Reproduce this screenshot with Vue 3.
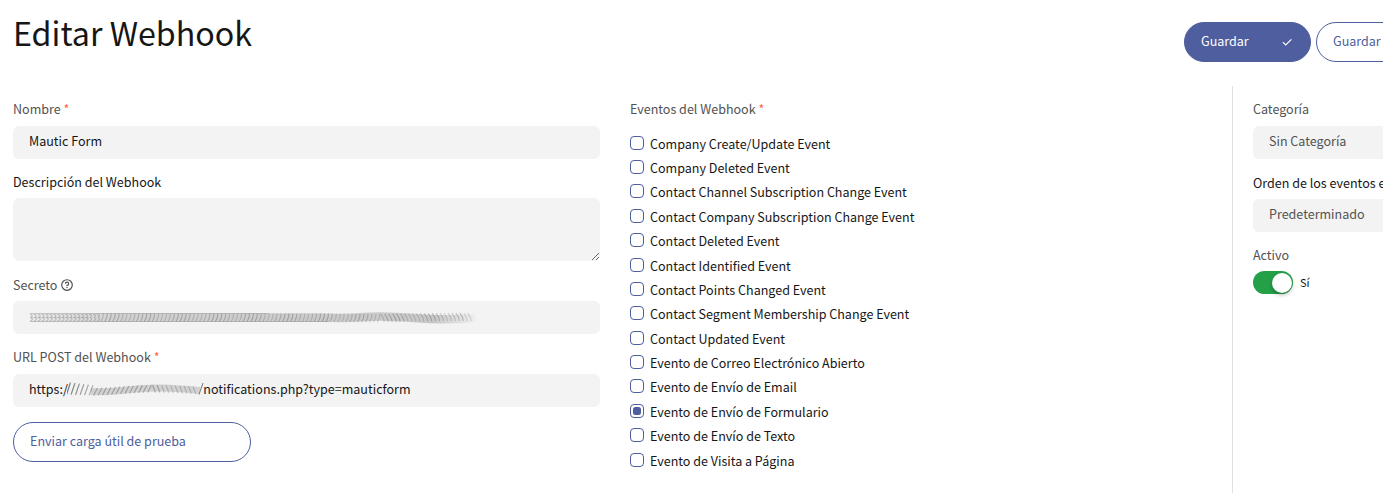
<script setup>
const events = [
  'Company Create/Update Event',
  'Company Deleted Event',
  'Contact Channel Subscription Change Event',
  'Contact Company Subscription Change Event',
  'Contact Deleted Event',
  'Contact Identified Event',
  'Contact Points Changed Event',
  'Contact Segment Membership Change Event',
  'Contact Updated Event',
  'Evento de Correo Electrónico Abierto',
  'Evento de Envío de Email',
  'Evento de Envío de Formulario',
  'Evento de Envío de Texto',
  'Evento de Visita a Página',
]
const selected = 'Evento de Envío de Formulario'

// Hatch marks that conceal the secret value
const secretMarks = Array.from({ length: 112 }, (_, i) => {
  const x = 2 + i * 3.95
  const y = 6.5 + (x > 300 ? Math.sin((x - 300) / 28) * 0.6 : 0)
  const lean = x > 350 ? -1.8 : 1.2
  return {
    d: x < 70
      ? `M${x - 1} ${y + 1} Q${x + 3} ${y + 1} ${x} ${y + 4} Q${x + 3.5} ${y + 6} ${x - 1} ${y + 7.5}`
      : `M${x - lean} ${y + 8} Q${x + 1.5} ${y + 4} ${x + lean} ${y}`,
    o: x < 70 ? 0.3 : x > 435 ? 0.2 : 0.3 + 0.07 * Math.sin(i * 0.7),
  }
})

// Slanted strokes that conceal the host name
const hostMarks = Array.from({ length: 29 }, (_, i) => {
  const x = 1.5 + i * 4.5
  const slash = x < 26
  const y = 9 - 2 * Math.sin((x - 45) / 30) + (x > 95 ? 0.2 : 0)
  const h = slash ? 12 - x / 12 : 7.5
  const top = slash ? 4.5 + x / 9 : y
  const lean = x < 85 ? 1.9 : -1.4
  return {
    d: `M${x - lean} ${top + h} L${x + lean} ${top}`,
    o: slash ? 0.72 - x / 70 : x > 95 ? 0.26 : 0.36,
  }
})
</script>

<template>
  <div class="page">
    <header class="top">
      <h1>Editar Webhook</h1>
      <div class="actions">
        <button class="btn primary">
          <span>Guardar</span>
          <svg width="16" height="16" viewBox="0 0 16 16"><path d="M3.9 8.2 L6.7 11 L12.4 5.3" fill="none" stroke="#fff" stroke-width="1.15" /></svg>
        </button>
        <button class="btn outline save-close">Guardar y cerrar</button>
      </div>
    </header>

    <main class="body">
      <section class="fields">
        <label class="lbl">Nombre <b>*</b></label>
        <div class="input">Mautic Form</div>
        <label class="lbl dark desc">Descripción del Webhook</label>
        <textarea class="area"></textarea>
        <label class="lbl secret">Secreto
          <svg class="help" width="12" height="12" viewBox="0 0 12 12">
            <circle cx="6" cy="6" r="5.3" fill="none" stroke="#4c4c4c" stroke-width="1.15" />
            <path d="M4.4 4.7 A1.6 1.6 0 1 1 6 6.3 V7.1" fill="none" stroke="#4c4c4c" stroke-width="1.15" />
            <rect x="5.4" y="7.9" width="1.2" height="1.2" fill="#4c4c4c" />
          </svg>
        </label>
        <div class="input">
          <svg class="smear" width="450" height="20" viewBox="0 0 450 20">
            <defs>
              <linearGradient id="band" gradientUnits="userSpaceOnUse" x1="0" y1="0" x2="450" y2="0">
                <stop offset="0" stop-color="#888" stop-opacity=".05" />
                <stop offset=".2" stop-color="#888" stop-opacity=".32" />
                <stop offset=".9" stop-color="#888" stop-opacity=".4" />
                <stop offset="1" stop-color="#888" stop-opacity="0" />
              </linearGradient>
            </defs>
            <path d="M1 6.5H240" stroke="#777" stroke-width=".7" opacity=".5" />
            <path d="M1 10.5H60" stroke="#777" stroke-width=".7" opacity=".35" />
            <path d="M1 14.5H300" stroke="#777" stroke-width=".8" opacity=".5" />
            <path d="M1 10.5H290 Q315 11.5 335 10 T385 11 T446 11" fill="none" stroke="url(#band)" stroke-width="8.5" />
            <path v-for="(m, i) in secretMarks" :key="i" :d="m.d" :opacity="m.o" fill="none" stroke="#555" stroke-width="1.1" />
          </svg>
        </div>
        <label class="lbl url">URL POST del Webhook <b>*</b></label>
        <div class="input black">
          <span>https:/</span>
          <svg class="smear host" width="137.5" height="20" viewBox="0 0 137.5 20">
            <path d="M24 13.5 Q42 14.5 60 12 T95 10 T133 12.5" fill="none" stroke="#888" stroke-width="7" opacity=".3" />
            <path v-for="(m, i) in hostMarks" :key="i" :d="m.d" :opacity="m.o" fill="none" stroke="#444" stroke-width="1.2" />
            <path d="M132 16.5L136 5" stroke="#444" opacity=".7" />
          </svg>
          <span>notifications.php?type=mauticform</span>
        </div>
        <button class="btn outline test">Enviar carga útil de prueba</button>
      </section>

      <section class="events">
        <label class="lbl">Eventos del Webhook <b>*</b></label>
        <ul>
          <li v-for="e in events" :key="e">
            <i class="box" :class="{ on: e === selected }"></i><span>{{ e }}</span>
          </li>
        </ul>
      </section>

      <aside class="side">
        <label class="lbl">Categoría</label>
        <div class="input grey">Sin Categoría</div>
        <label class="lbl dark order">Orden de los eventos en cola</label>
        <div class="input grey">Predeterminado</div>
        <label class="lbl active">Activo</label>
        <div class="switch"><i class="track"><i class="knob"></i></i><span>Sí</span></div>
      </aside>
    </main>
  </div>
</template>

<style>
body { background: #fff; overflow: hidden; }
</style>

<style scoped>
* { box-sizing: border-box; }
.page {
  width: 1383px;
  height: 493px;
  overflow: hidden;
  background: #fff;
  color: #161616;
  font: 12.54px/20px "Noto Sans CJK SC", "Noto Sans CJK JP", sans-serif;
  white-space: nowrap;
}
.top { display: flex; justify-content: space-between; height: 86px; padding-left: 13px; }
h1 { margin: 7px 0 0; font-size: 32.23px; line-height: 50px; font-weight: 400; }
.actions { display: flex; gap: 5px; width: 199px; padding-top: 22px; }
.btn {
  flex: none;
  display: flex;
  align-items: center;
  justify-content: space-between;
  height: 40px;
  padding: 0 16px 3px;
  border: 1px solid #4e5e9e;
  border-radius: 20px;
  font: inherit;
  background: #fff;
  color: #4e5e9e;
}
.primary { width: 127px; background: #4e5e9e; color: #fff; }
.primary svg { position: relative; top: 1px; margin-right: -1px; }
.save-close { width: 174px; }
.body { display: flex; height: 407px; }
.fields { width: 600px; padding: 13px 0 0 13px; }
.lbl { display: block; height: 20px; margin-bottom: 7px; color: #525252; }
.lbl b { color: #ff6347; font-weight: 400; }
.lbl.dark { color: #161616; }
.input {
  display: flex;
  height: 33px;
  padding: 4px 16px 0;
  border-radius: 6px;
  background: #f3f3f3;
  line-height: 22px;
}
.grey { color: #525252; }
.lbl.desc { margin: 13px 0 6px; }
.area {
  display: block;
  width: 587px;
  height: 63px;
  border: 0;
  border-radius: 6px;
  background: #f3f3f3;
  resize: both;
}
.lbl.secret { margin: 14px 0 6px; }
.help { margin-left: 1px; vertical-align: -1px; }
.lbl.url { margin: 13px 0 7px; }
.smear { flex: none; margin-top: 2px; filter: blur(.55px); }
.smear.host { margin: 0 -1px 0 -1px; }
.test { width: 238px; margin-top: 15px; }
.events { width: 632px; padding: 13px 0 0 30px; }
ul { margin: 16.7px 0 0; padding: 0; list-style: none; }
.events .lbl { margin-bottom: 0; }
li { display: flex; height: 24.375px; line-height: 16px; }
.box { flex: none; width: 14px; height: 14px; margin-right: 6px; border: 1px solid #4e5e9e; border-radius: 4px; }
.on::before { content: ""; display: block; width: 8px; height: 8px; margin: 2px; border-radius: 2.5px; background: #4e5e9e; }
.side { width: 151px; padding: 13px 0 0 20px; border-left: 1px solid #e0e0e0; }
.side .input { width: 240px; }
.lbl.order { margin: 14px 0 6px; }
.lbl.active { margin: 13px 0 6px; }
.switch { display: flex; line-height: 22px; font-size: 11px; }
.track { width: 40px; height: 23px; margin-right: 7px; padding: 1.5px 1px 0 19px; border-radius: 12px; background: #24a148; }
.knob { display: block; width: 20px; height: 20px; border-radius: 50%; background: #fff; box-shadow: 0 2px 4px rgba(0, 0, 0, .3); }
</style>
